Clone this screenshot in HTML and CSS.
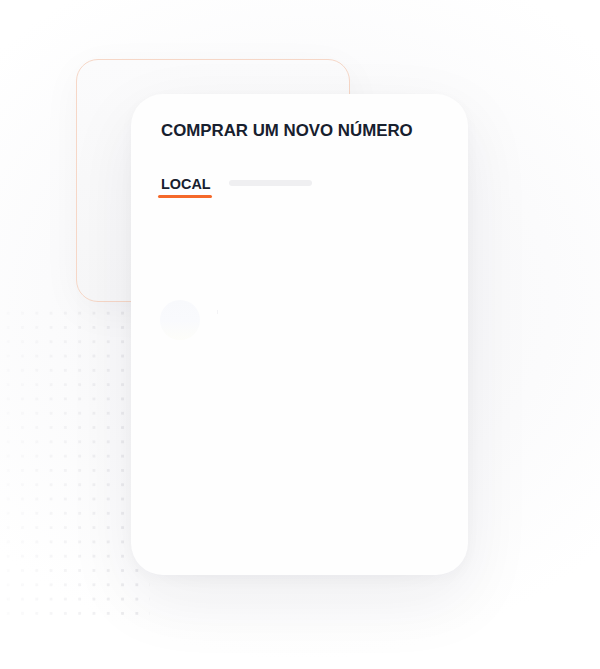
FILE: index.html
```html
<!DOCTYPE html>
<html lang="pt">
<head>
<meta charset="utf-8">
<title>Comprar um novo número</title>
<link rel="stylesheet" href="styles.css">
</head>
<body>
<div class="stage">
  <div class="dots"></div>
  <div class="back-card"></div>
  <div class="card">
    <h1 class="title">COMPRAR UM NOVO NÚMERO</h1>
    <div class="tabs">
      <div class="tab active">LOCAL</div>
      <div class="tab-placeholder"></div>
    </div>
    <div class="loading">
      <div class="spinner"></div>
      <div class="tick"></div>
    </div>
  </div>
</div>
</body>
</html>
```
FILE: styles.css
```css
html, body {
  margin: 0;
  padding: 0;
  background: #ffffff;
}
.stage {
  width: 600px;
  height: 669px;
  display: grid;
  grid-template-columns: 600px;
  grid-template-rows: 669px;
  overflow: hidden;
  background: radial-gradient(ellipse 420px 360px at 300px 300px, #f6f6f8 0%, #fbfbfc 60%, #ffffff 100%);
  font-family: "Liberation Sans", Arial, sans-serif;
}
.dots {
  grid-area: 1 / 1;
  position: relative;
  z-index: 0;
  margin: 306px 0 0 0;
  width: 150px;
  height: 310px;
  background-image: radial-gradient(circle, #e0e0e4 1.3px, transparent 1.8px);
  background-size: 14.3px 14.3px;
  background-position: 1px 0;
  -webkit-mask-image: linear-gradient(90deg, rgba(0,0,0,0.15) 0%, rgba(0,0,0,1) 85%);
  mask-image: linear-gradient(90deg, rgba(0,0,0,0.15) 0%, rgba(0,0,0,1) 85%);
  opacity: 0.6;
}
.back-card {
  grid-area: 1 / 1;
  position: relative;
  z-index: 1;
  margin: 59px 0 0 76px;
  width: 272px;
  height: 241px;
  border: 1px solid #f6d7c7;
  border-radius: 22px;
  background: linear-gradient(180deg, #fbfbfc 0%, #f7f7f8 100%);
  box-shadow: 0 10px 40px rgba(30, 30, 50, 0.04);
}
.card {
  grid-area: 1 / 1;
  position: relative;
  z-index: 2;
  margin: 94px 0 0 131px;
  width: 337px;
  height: 481px;
  box-sizing: border-box;
  padding: 27px 30px 0 30px;
  border-radius: 32px;
  background: #fefefe;
  box-shadow: 0 24px 70px rgba(30, 30, 60, 0.07), 0 4px 14px rgba(30, 30, 60, 0.03);
  display: flex;
  flex-direction: column;
}
.title {
  margin: 0;
  font-size: 16.85px;
  line-height: 20px;
  font-weight: 700;
  color: #17202e;
  letter-spacing: 0;
}
.tabs {
  margin-top: 34px;
  display: flex;
  align-items: flex-start;
  gap: 18px;
}
.tab {
  font-size: 14.4px;
  line-height: 18px;
  font-weight: 700;
  color: #17202e;
  padding-bottom: 5px;
  position: relative;
}
.tab.active::after {
  content: "";
  position: absolute;
  left: -3px;
  right: -1px;
  bottom: 0;
  height: 3px;
  border-radius: 2px;
  background: #f5692a;
}
.tab-placeholder {
  margin-top: 5px;
  width: 83px;
  height: 6px;
  border-radius: 3px;
  background: #efeff1;
}
.loading {
  margin-top: 102px;
  display: flex;
  align-items: flex-start;
  gap: 17px;
}
.spinner {
  width: 40px;
  height: 40px;
  border-radius: 50%;
  margin-left: -1px;
  background: linear-gradient(180deg, #f8f9fc 0%, #f9fafd 50%, #fdfdf9 100%);
}
.tick {
  margin-top: 10px;
  width: 1px;
  height: 4px;
  background: #f3f3f5;
}
```
